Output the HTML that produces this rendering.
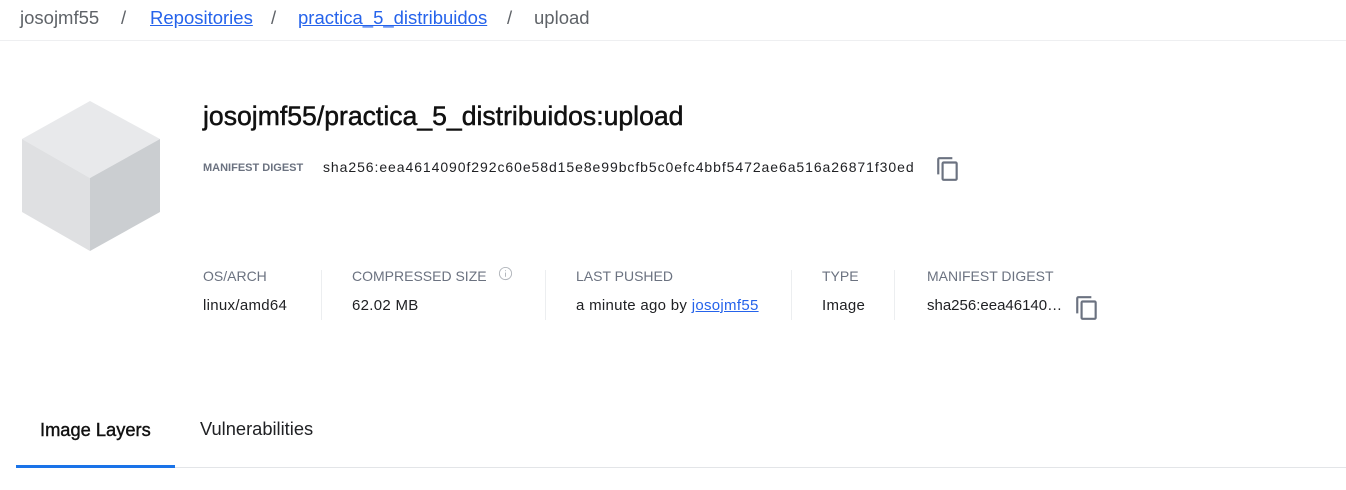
<!DOCTYPE html>
<html><head><style>
body{margin:0;width:1346px;height:490px;background:#fff;font-family:"Liberation Sans",sans-serif;position:relative;overflow:hidden}
.a{position:absolute;white-space:nowrap}
.bc{top:7px;font-size:18.5px;color:#5f6368}
.lnk{color:#2563eb;text-decoration:underline}
.lbl{top:268px;font-size:14px;color:#6b7280}
.val{top:297px;font-size:15px;color:#202124;letter-spacing:0.3px}
.div{position:absolute;top:270px;width:1px;height:50px;background:#eceef0}
</style></head><body>
<div class="a bc" style="left:20px">josojmf55</div>
<div class="a bc" style="left:121px">/</div>
<div class="a bc lnk" style="left:150px">Repositories</div>
<div class="a bc" style="left:271px">/</div>
<div class="a bc lnk" style="left:298px">practica_5_distribuidos</div>
<div class="a bc" style="left:507px">/</div>
<div class="a bc" style="left:534px">upload</div>
<div style="position:absolute;left:0;top:40px;width:1346px;height:1px;background:#eeeff1"></div>

<svg style="position:absolute;left:0;top:0" width="180" height="260">
<polygon points="90,101 160,139 90,178 22,139" fill="#e8e9eb"/>
<polygon points="22,139 90,178 90,251 22,212" fill="#dfe0e2"/>
<polygon points="160,139 90,178 90,251 160,212" fill="#cbced1"/>
</svg>

<div class="a" style="left:203px;top:101px;font-size:26.6px;color:#111;-webkit-text-stroke:0.5px #111">josojmf55/practica_5_distribuidos:upload</div>
<div class="a" style="left:203px;top:162px;font-size:11px;font-weight:bold;color:#6b7280">MANIFEST DIGEST</div>
<div class="a" style="left:323px;top:159px;font-size:14px;color:#202124;letter-spacing:0.93px">sha256:eea4614090f292c60e58d15e8e99bcfb5c0efc4bbf5472ae6a516a26871f30ed</div>
<svg style="position:absolute;left:935px;top:156px" width="26" height="26" viewBox="0 0 24 24"><path fill="#6b7280" d="M16 1H4c-1.1 0-2 .9-2 2v14h2V3h12V1zm3 4H8c-1.1 0-2 .9-2 2v14c0 1.1.9 2 2 2h11c1.1 0 2-.9 2-2V7c0-1.1-.9-2-2-2zm0 16H8V7h11v14z"/></svg>

<div class="a lbl" style="left:203px">OS/ARCH</div>
<div class="a lbl" style="left:352px">COMPRESSED SIZE</div>
<svg style="position:absolute;left:498px;top:266px" width="15" height="15" viewBox="0 0 16 16"><circle cx="8" cy="8" r="6.5" fill="none" stroke="#b0b4ba" stroke-width="1"/><rect x="7.5" y="7" width="1" height="4.5" fill="#b0b4ba"/><rect x="7.5" y="4.5" width="1" height="1" fill="#b0b4ba"/></svg>
<div class="a lbl" style="left:576px">LAST PUSHED</div>
<div class="a lbl" style="left:822px">TYPE</div>
<div class="a lbl" style="left:927px">MANIFEST DIGEST</div>
<div class="div" style="left:321px"></div>
<div class="div" style="left:545px"></div>
<div class="div" style="left:791px"></div>
<div class="div" style="left:894px"></div>
<div class="a val" style="left:203px">linux/amd64</div>
<div class="a val" style="left:352px">62.02 MB</div>
<div class="a val" style="left:576px">a minute ago by <span class="lnk">josojmf55</span></div>
<div class="a val" style="left:822px">Image</div>
<div class="a val" style="left:927px;letter-spacing:0">sha256:eea46140…</div>
<svg style="position:absolute;left:1074px;top:295px" width="26" height="26" viewBox="0 0 24 24"><path fill="#6b7280" d="M16 1H4c-1.1 0-2 .9-2 2v14h2V3h12V1zm3 4H8c-1.1 0-2 .9-2 2v14c0 1.1.9 2 2 2h11c1.1 0 2-.9 2-2V7c0-1.1-.9-2-2-2zm0 16H8V7h11v14z"/></svg>

<div class="a" style="left:40px;top:419px;font-size:18.3px;color:#111;-webkit-text-stroke:0.4px #111">Image Layers</div>
<div class="a" style="left:200px;top:418px;font-size:18.3px;color:#202124">Vulnerabilities</div>
<div style="position:absolute;left:16px;top:467px;width:1330px;height:1px;background:#e3e5e8"></div>
<div style="position:absolute;left:16px;top:465px;width:159px;height:3px;background:#1a73e8"></div>
</body></html>
